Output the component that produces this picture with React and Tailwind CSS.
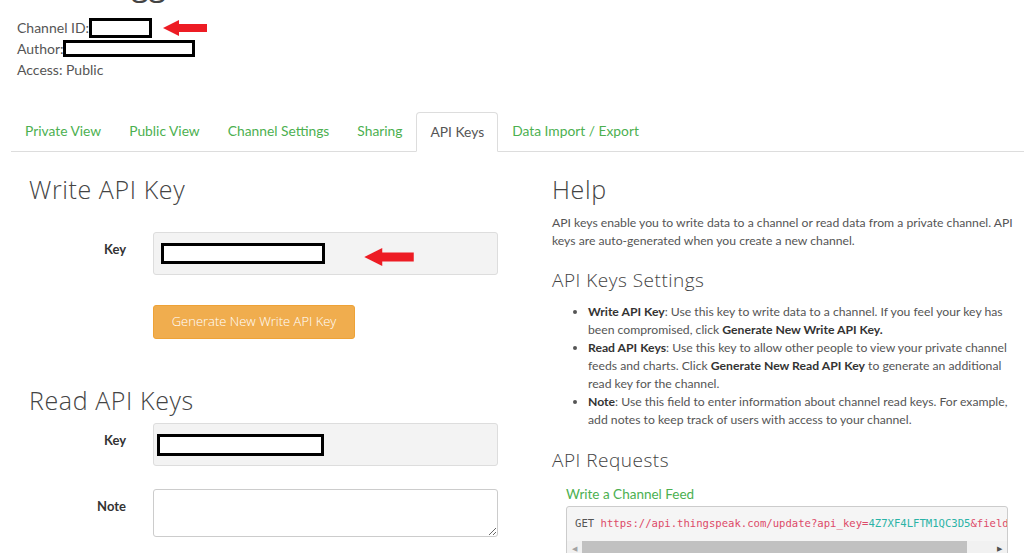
import { useState } from 'react';

const body = { fontFamily: 'Lato, "Open Sans", sans-serif' };
const head = { fontFamily: '"Open Sans", Lato, sans-serif' };

function Redacted({ className }) {
  return <span className={`inline-block border-[3px] border-black bg-white ${className}`} />;
}

function RedArrow({ className }) {
  return (
    <svg className={className} viewBox="0 0 44 16" width="44" height="16">
      <path d="M0 8 L16 0 L16 4 L44 4 L44 12 L16 12 L16 16 Z" fill="#ed1c24" />
    </svg>
  );
}

function Tab({ label, active }) {
  if (active) {
    return (
      <li className="-mb-px rounded-t-[4px] border border-[#ddd] border-b-white bg-white px-[13px] py-[10px] text-[#555]">
        {label}
      </li>
    );
  }
  return <li className="px-[14px] py-[10px] text-[#4cb050]">{label}</li>;
}

function FormRow({ label, children, className = '' }) {
  return (
    <div className={`flex ${className}`}>
      <div className="w-[124px] shrink-0 pr-[27px] pt-[8px] text-right text-[13px] font-bold text-[#333]">{label}</div>
      <div className="flex-1">{children}</div>
    </div>
  );
}

function Heading({ children, className = '' }) {
  return (
    <h2 className={`text-[25px] font-light leading-[28px] tracking-[0.6px] text-[#444] ${className}`} style={head}>
      {children}
    </h2>
  );
}

export default function App() {
  const [note, setNote] = useState('');

  return (
    <div className="h-[553px] w-[1024px] overflow-hidden bg-white text-[#555]" style={body}>
      {/* channel title scrolled out of view */}
      <div className="flex h-[4px] items-end overflow-hidden pl-[17px]">
        <h1 className="text-[32px] leading-[42px] text-[#444]" style={head}>
          Data Logger
        </h1>
      </div>

      <div className="mt-[13px] pl-[17px] text-[14px] leading-[21px]">
        <div className="flex items-center">
          Channel ID:
          <Redacted className="h-[20px] w-[63px]" />
          <RedArrow className="ml-[11px]" />
        </div>
        <div className="flex items-center">
          Author:
          <Redacted className="h-[17px] w-[132px]" />
        </div>
        <div>Access: Public</div>
      </div>

      <ul className="ml-[11px] mt-[32px] flex border-b border-[#ddd] text-[13.8px] leading-[18px]">
        <Tab label="Private View" />
        <Tab label="Public View" />
        <Tab label="Channel Settings" />
        <Tab label="Sharing" />
        <Tab label="API Keys" active />
        <Tab label="Data Import / Export" />
      </ul>

      <div className="flex">
        <div className="w-[498px] shrink-0 pl-[29px]">
          <Heading className="mt-[23px]">Write API Key</Heading>
          <FormRow label="Key" className="mt-[29px]">
            <div className="flex h-[43px] items-center rounded-[3px] border border-[#ddd] bg-[#f3f3f3] pl-[7px]">
              <Redacted className="h-[21px] w-[164px]" />
              <RedArrow className="ml-[38px] mt-[6px] h-[18px] w-[52px]" />
            </div>
          </FormRow>
          <div className="mt-[30px] pl-[124px]">
            <button
              type="button"
              className="h-[34px] w-[202px] rounded-[3px] border border-[#eea236] bg-[#f0ad4e] text-[13px] font-light text-white"
              style={head}
            >
              Generate New Write API Key
            </button>
          </div>

          <Heading className="mt-[47px]">Read API Keys</Heading>
          <FormRow label="Key" className="mt-[9px]">
            <div className="flex h-[43px] items-center rounded-[3px] border border-[#ddd] bg-[#f3f3f3] pl-[3px]">
              <Redacted className="h-[22px] w-[167px]" />
            </div>
          </FormRow>
          <FormRow label="Note" className="mt-[23px]">
            <textarea
              value={note}
              onChange={(e) => setNote(e.target.value)}
              className="block h-[48px] w-full rounded-[3px] border border-[#ccc] bg-white"
            />
          </FormRow>
        </div>

        <div className="ml-[54px] w-[466px] shrink-0">
          <Heading className="mt-[23px]">Help</Heading>
          <p className="mt-[11px] text-[12.2px] leading-[18px]">
            API keys enable you to write data to a channel or read data from a private channel. API keys are
            auto-generated when you create a new channel.
          </p>
          <h3
            className="mt-[18px] text-[19px] font-light leading-[24px] tracking-[0.5px] text-[#444]"
            style={head}
          >
            API Keys Settings
          </h3>
          <ul className="mt-[11px] list-disc pl-[36px] text-[12.2px] leading-[18px]">
            <li>
              <b className="text-[#333]">Write API Key</b>: Use this key to write data to a channel. If you feel your key
              has been compromised, click <b className="text-[#333]">Generate New Write API Key.</b>
            </li>
            <li>
              <b className="text-[#333]">Read API Keys</b>: Use this key to allow other people to view your private
              channel feeds and charts. Click <b className="text-[#333]">Generate New Read API Key</b> to generate an
              additional read key for the channel.
            </li>
            <li>
              <b className="text-[#333]">Note</b>: Use this field to enter information about channel read keys. For
              example, add notes to keep track of users with access to your channel.
            </li>
          </ul>
          <h3
            className="mt-[19px] text-[19px] font-light leading-[24px] tracking-[0.5px] text-[#444]"
            style={head}
          >
            API Requests
          </h3>
          <div className="ml-[14px] mt-[13px] text-[13.5px] leading-[18px] text-[#4cb050]">Write a Channel Feed</div>
          <div className="ml-[14px] mt-[3px] w-[442px] overflow-hidden rounded-[3px] border border-[#ccc] bg-[#f5f5f5]">
            <div
              className="whitespace-nowrap px-[8px] pb-[10px] pt-[9px] text-[10.6px] leading-[15px]"
              style={{ fontFamily: '"DejaVu Sans Mono", "Liberation Mono", monospace' }}
            >
              <span className="text-[#555]">GET </span>
              <span className="text-[#dd4a68]">https://api.thingspeak.com/update?api_key=</span>
              <span className="text-[#2ab3a6]">4Z7XF4LFTM1QC3D5</span>
              <span className="text-[#dd4a68]">&amp;field1=0</span>
            </div>
            <div className="flex h-[15px] items-center bg-[#f1f1f1]">
              <span className="w-[15px] text-center text-[7px] text-[#a3a3a3]">◀</span>
              <span className="h-[15px] w-[385px] bg-[#c1c1c1]" />
              <span className="flex-1" />
              <span className="w-[15px] text-center text-[7px] text-[#505050]">▶</span>
            </div>
          </div>
        </div>
      </div>
    </div>
  );
}
